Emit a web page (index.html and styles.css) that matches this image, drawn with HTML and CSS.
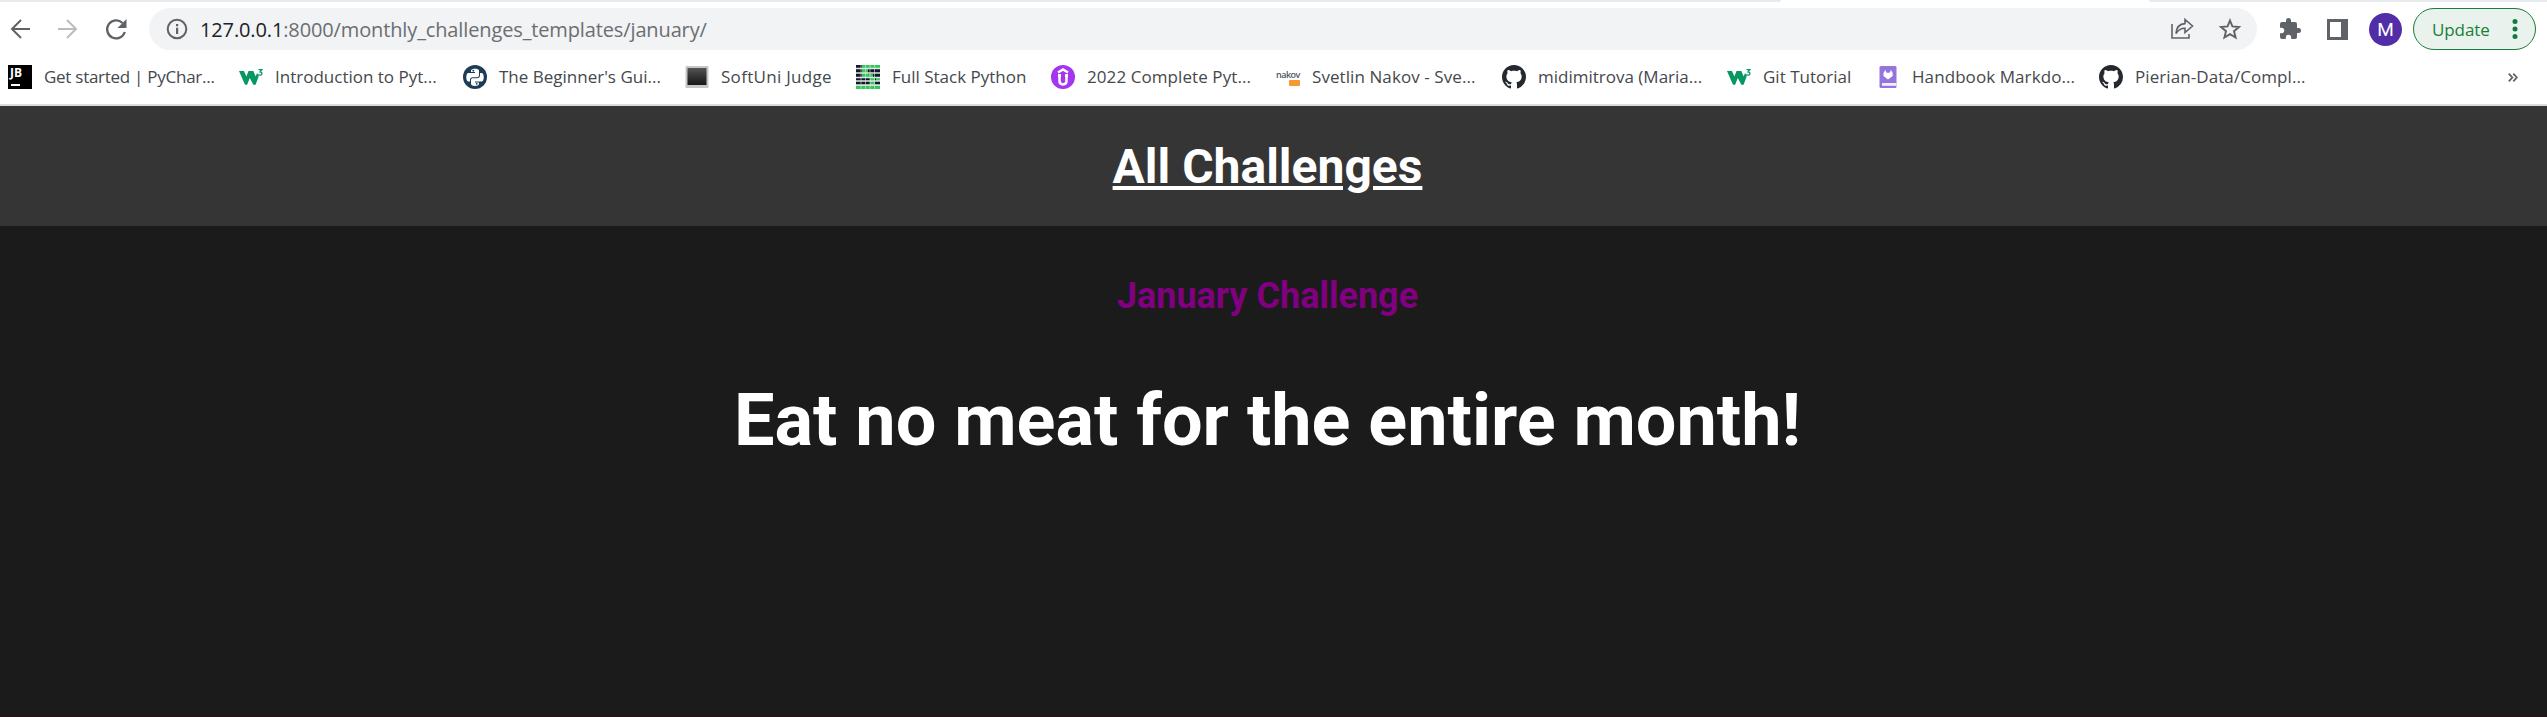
FILE: index.html
```html
<!DOCTYPE html>
<html lang="en">
<head>
<meta charset="utf-8">
<title>January Challenge</title>
<link rel="stylesheet" href="styles.css">
</head>
<body>
<svg class="defs" aria-hidden="true">
  <symbol id="github" viewBox="0 0 16 16"><path fill="#24292f" d="M8 0C3.58 0 0 3.58 0 8c0 3.54 2.29 6.53 5.47 7.59.4.07.55-.17.55-.38 0-.19-.01-.82-.01-1.49-2.01.37-2.53-.49-2.69-.94-.09-.23-.48-.94-.82-1.13-.28-.15-.68-.52-.01-.53.63-.01 1.08.58 1.23.82.72 1.21 1.87.87 2.33.66.07-.52.28-.87.51-1.07-1.78-.2-3.64-.89-3.64-3.95 0-.87.31-1.59.82-2.15-.08-.2-.36-1.02.08-2.12 0 0 .67-.21 2.2.82.64-.18 1.32-.27 2-.27s1.36.09 2 .27c1.53-1.04 2.2-.82 2.2-.82.44 1.1.16 1.92.08 2.12.51.56.82 1.27.82 2.15 0 3.07-1.87 3.75-3.65 3.95.29.25.54.73.54 1.48 0 1.07-.01 1.93-.01 2.2 0 .21.15.46.55.38A8.01 8.01 0 0 0 16 8c0-4.42-3.58-8-8-8z"/></symbol>
  <symbol id="w3" viewBox="0 0 24 24"><path fill="#059862" d="M0 6h5l2.400 5.500L9.500 6h4.800l2.400 5.500L18 8l1.800 3-3.200 8.800h-2.200L10.800 13l-2.700 6.800H6z"/><path fill="none" stroke="#059862" stroke-width="1.300" d="M19.500 4.700h3.300l-1.700 2.200c2.600 0 2.400 3.300.1 3.300-1 0-1.700-.4-1.900-1"/></symbol>
</svg>
<div class="tabstrip"><span class="tabs-left"></span><span class="tabs-right"></span></div>
<div class="toolbar">
  <div class="nav">
    <svg width="24" height="24" viewBox="0 0 24 24" fill="none" stroke="#5f6368" stroke-width="2"><path d="M22 12H4M13 3l-9 9 9 9"/></svg>
    <svg width="24" height="24" viewBox="0 0 24 24" fill="none" stroke="#babcbe" stroke-width="2"><path d="M2 12h18M11 3l9 9-9 9"/></svg>
    <svg width="24" height="24" viewBox="0 0 24 24"><path d="M20.800 15A9 9 0 1 1 18.500 6" fill="none" stroke="#5f6368" stroke-width="2.300"/><path fill="#5f6368" d="M22.500 2v9h-9z"/></svg>
  </div>
  <div class="omnibox">
    <svg width="22" height="22" viewBox="0 0 22 22"><circle cx="11" cy="11" r="9.300" fill="none" stroke="#5f6368" stroke-width="2"/><path fill="#5f6368" d="M10 9.800h2.200V16H10zM10 6h2.200v2.200H10z"/></svg>
    <span class="url"><b>127.0.0.1</b>:8000/monthly_challenges_templates/january/</span>
    <svg class="share" width="24" height="24" viewBox="0 0 24 24" fill="none" stroke="#5f6368" stroke-width="1.600"><path d="M2 7v14h17v-4M6 16.500C6.500 10 10 6.800 15 6.600V2.500L22.500 9 15 15.500v-4.200c-4.500-.1-6.800 1.700-9 5.200z"/></svg>
    <svg width="24" height="24" viewBox="0 0 24 24" fill="none" stroke="#5f6368" stroke-width="1.900"><path d="M12 3.500l2.400 5.900 6.600.6-5 4.200 1.600 6.300L12 17.100l-5.600 3.400L8 14.200 3 10l6.600-.6z"/></svg>
  </div>
  <svg class="puzzle" width="24" height="24" viewBox="0 0 24 24"><path fill="#5f6368" d="M20.500 11H19V7a2 2 0 0 0-2-2h-4V3.500a2.500 2.500 0 0 0-5 0V5H4a2 2 0 0 0-2 2v3.800h1.500a2.700 2.700 0 0 1 0 5.400H2V20a2 2 0 0 0 2 2h3.800v-1.500a2.700 2.700 0 0 1 5.400 0V22H17a2 2 0 0 0 2-2v-4h1.500a2.500 2.500 0 0 0 0-5z"/></svg>
  <span class="panel"></span>
  <span class="avatar">M</span>
  <div class="update"><span>Update</span><svg width="6" height="20" viewBox="0 0 6 20" fill="#137a3a"><circle cx="3" cy="2.600" r="2.500"/><circle cx="3" cy="10" r="2.500"/><circle cx="3" cy="17.400" r="2.500"/></svg></div>
</div>
<div class="bookmarks">
  <div class="bm b1"><span class="jb">JB</span><span class="label">Get started | PyChar...</span></div>
  <div class="bm b2"><svg><use href="#w3"/></svg><span class="label">Introduction to Pyt...</span></div>
  <div class="bm b3"><svg viewBox="0 0 24 24"><circle cx="12" cy="12" r="12" fill="#1d3c56"/><path fill="#fff" d="M8 7V5.500C8 3 16 3 16 5.500V10c0 1.500-.8 2.300-2.300 2.300H9.800c-1.800 0-2.800 1-2.800 2.700v1.500H5.500C2.500 16.500 2.500 8 5.500 8H12V7z"/><path fill="#fff" d="M16 17.500V19c0 2.500-8 2.500-8 0v-4c0-1.200.7-1.800 2-1.800h4c1.900 0 3-1.200 3-3V8h1.500c3 0 3 8.500 0 8.500H12v1z"/><circle cx="10.300" cy="5.700" r=".9" fill="#1d3c56"/><circle cx="13.700" cy="18.800" r=".9" fill="#1d3c56"/></svg><span class="label">The Beginner's Gui...</span></div>
  <div class="bm b4"><svg viewBox="0 0 24 24"><defs><linearGradient id="scr" x2="0" y2="1"><stop stop-color="#555"/><stop offset=".5" stop-color="#333"/><stop offset="1" stop-color="#171717"/></linearGradient></defs><rect x=".5" y="1" width="23" height="22" rx="1" fill="#c3c7c9"/><rect x="2.500" y="3" width="19" height="17" fill="url(#scr)"/></svg><span class="label">SoftUni Judge</span></div>
  <div class="bm b5"><svg viewBox="0 0 24 24"><path fill="#15152b" d="M0 0h24v20H0z"/><path fill="#35c759" d="M6 0h18v3H6zM6 4h6v9H6zM9 9h8v4H9zM14 13h5v7h-5zM0 20.500h24V24H0zM20 13h4v3h-4z"/><path stroke="#d7eadf" stroke-width="1.300" fill="none" d="M0 3.500h24M0 8h24M0 12.500h24M0 16h24M0 20h24"/><path stroke="#d7eadf" stroke-opacity=".6" stroke-width="1" d="M5 0v24M9.500 0v24M14 0v24M18.500 0v24"/></svg><span class="label">Full Stack Python</span></div>
  <div class="bm b6"><svg viewBox="0 0 24 24"><circle cx="12" cy="12" r="12" fill="#a435f0"/><path fill="none" stroke="#fff" stroke-width="2.500" d="M7 7.500L12 4.500l5 3M8.500 10v6c0 4.500 7 4.500 7 0v-6"/><path fill="#fff" d="M7 9h3v3H7zM14 9h3v3h-3z"/></svg><span class="label">2022 Complete Pyt...</span></div>
  <div class="bm b7"><span class="nakov"><i>nakov</i><b></b></span><span class="label">Svetlin Nakov - Sve...</span></div>
  <div class="bm b8"><svg><use href="#github"/></svg><span class="label">midimitrova (Maria...</span></div>
  <div class="bm b9"><svg><use href="#w3"/></svg><span class="label">Git Tutorial</span></div>
  <div class="bm b10"><svg viewBox="0 0 24 24"><rect x="3.500" y="1" width="17" height="22" rx="1.500" fill="#9475db"/><path fill="#f2edff" d="M6 18h14.500v2.800H6z"/><path fill="#fff" d="M7.500 8L9.300 5l1.300 2.800h3L15 5l1.700 3v3L12 14.500 7.500 11z"/></svg><span class="label">Handbook Markdo...</span></div>
  <div class="bm b11"><svg><use href="#github"/></svg><span class="label">Pierian-Data/Compl...</span></div>
  <svg class="more" width="10" height="9" viewBox="0 0 10 9" fill="none" stroke="#5f6368" stroke-width="1.800"><path d="M.8.700l3.500 3.800L.8 8.300M5.300.700l3.500 3.800-3.500 3.800"/></svg>
</div>
<header class="site-header"><a href="#">All Challenges</a></header>
<main class="page">
  <h2>January Challenge</h2>
  <h1>Eat no meat for the entire month!</h1>
</main>
</body>
</html>
```
FILE: styles.css
```css
* { box-sizing: border-box; }
body { margin: 0; height: 717px; overflow: hidden; background: #1b1b1b; font-family: "Open Sans", "Noto Sans", sans-serif; }
svg { display: block; flex: none; }
.defs { width: 0; height: 0; position: absolute; }
.tabstrip { height: 2px; display: flex; justify-content: space-between; background: #fff; }
.tabs-left { width: 1781px; background: #e8e9ed; border-bottom-right-radius: 2px; }
.tabs-right { width: 398px; background: #e8e9ed; border-bottom-left-radius: 2px; }
.toolbar { height: 56px; padding: 6px 11px 8px 8px; display: flex; align-items: center; background: #fff; }
.nav { display: flex; gap: 24px; width: 141px; flex: none; }
.omnibox { width: 2108px; flex: none; height: 42px; padding: 0 15px 0 17px; border-radius: 21px; background: #f1f3f4; display: flex; align-items: center; }
.url { margin-left: 12px; font-size: 20px; letter-spacing: -0.13px; color: #6b6e72; white-space: nowrap; }
.url b { font-weight: 400; color: #202124; }
.share { margin-left: auto; margin-right: 24px; }
.puzzle { margin-left: 21px; }
.panel { width: 21px; height: 21px; flex: none; margin-left: 25px; border: 3px solid #5f6368; border-right-width: 7px; }
.avatar { width: 33px; height: 33px; flex: none; margin-left: 21px; border-radius: 50%; background: #512da8; color: #fff; font: 19px/33px Roboto, sans-serif; text-align: center; }
.update { width: 123px; height: 42px; flex: none; margin-left: 11px; padding: 0 17px 0 18px; border: 1.5px solid #188038; border-radius: 21px; background: #e9f2ed; color: #188038; font-size: 17px; letter-spacing: -0.1px; display: flex; align-items: center; justify-content: space-between; }
.bookmarks { height: 48px; padding: 1px 29px 9px 8px; display: flex; align-items: center; background: #fff; border-bottom: 2px solid #dadce0; }
.bm { display: flex; align-items: center; gap: 12px; flex: none; }
.bm > svg, .nakov, .jb { width: 24px; height: 24px; flex: none; }
.label { font-size: 17px; line-height: 24px; color: #45484c; white-space: nowrap; }
.b1 { width: 231px; } .b2 { width: 224px; } .b3 { width: 222px; } .b4 { width: 171px; }
.b5 { width: 195px; } .b6 { width: 225px; } .b7 { width: 226px; } .b8 { width: 225px; }
.b9 { width: 149px; } .b10 { width: 223px; } .b11 { width: 220px; }
.b1 .label { letter-spacing: -0.27px; }
.b4 .label { letter-spacing: 0.3px; }
.b7 .label, .b6 .label, .b10 .label, .b11 .label { letter-spacing: 0.08px; }
.jb { background: #000 linear-gradient(#fff, #fff) 3px 19px / 9px 2px no-repeat; color: #fff; font: bold 12px/14px "Open Sans", sans-serif; padding: 1px 2px; }
.nakov { display: flex; flex-direction: column; align-items: flex-end; padding-top: 5px; }
.nakov i { font: 600 9px/10px "Open Sans", sans-serif; color: #4e5563; letter-spacing: -0.5px; width: 24px; }
.nakov b { width: 11px; height: 6px; border-radius: 1px; background: #f29a2e; }
.more { margin-left: auto; }
.site-header { height: 120px; padding: 2px 12px 0 0; display: flex; align-items: center; justify-content: center; background: #353535; }
.site-header a { color: #fff; font: bold 48px/56px Roboto, sans-serif; }
.page { height: 491px; padding: 49px 12px 0 0; text-align: center; font-family: Roboto, sans-serif; border-bottom: 1px solid #21151b; }
.page h2 { margin: 0; font-size: 36px; line-height: 42px; color: purple; }
.page h1 { margin: 62px 0 0; font-size: 72px; line-height: 84px; color: #fff; }
```
